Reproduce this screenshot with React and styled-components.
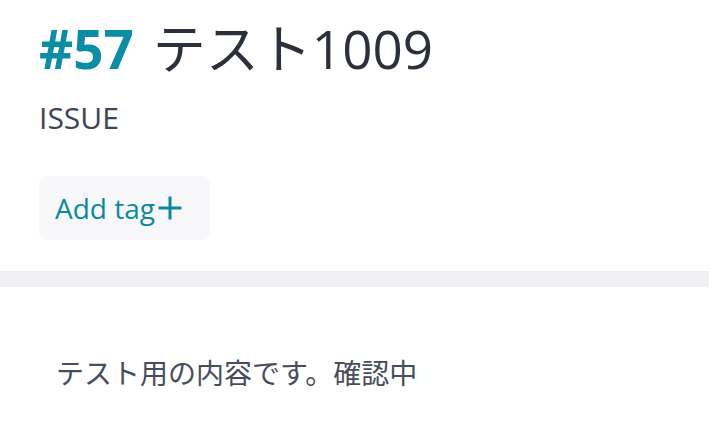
import React from 'react';
import styled, { createGlobalStyle } from 'styled-components';

const GlobalStyle = createGlobalStyle`
  body {
    margin: 0;
    background: #ffffff;
    font-family: "Open Sans", "Noto Sans CJK JP", sans-serif;
  }
`;

const Page = styled.div`
  width: 709px;
  height: 435px;
  overflow: hidden;
  background: #ffffff;
`;

const Header = styled.div`
  padding: 16px 0 0 39px;
  display: flex;
  flex-direction: column;
`;

const Title = styled.h1`
  margin: 0;
  font-size: 53px;
  font-weight: 400;
  line-height: 66px;
  color: #2b303b;
  display: flex;
  gap: 19px;
`;

const Number = styled.span`
  font-weight: 700;
  color: #0a8ea5;
`;

const Kind = styled.div`
  margin-top: 18px;
  font-size: 30px;
  line-height: 36px;
  color: #3d4455;
`;

const TagButton = styled.button`
  margin-top: 40px;
  align-self: flex-start;
  display: flex;
  align-items: center;
  gap: 3px;
  height: 64px;
  padding: 0 28px 0 16px;
  border: none;
  border-radius: 8px;
  background: #f8f8fa;
  color: #0a8aa0;
  font-family: inherit;
  font-size: 28px;
  cursor: pointer;
`;

const Divider = styled.div`
  margin-top: 31px;
  height: 16px;
  background: #f0f0f2;
`;

const Body = styled.div`
  padding: 68px 0 0 56px;
  font-size: 28px;
  line-height: 36px;
  color: #474d5c;
`;

const Plus = () => (
  <svg width="24" height="24" viewBox="0 0 24 24" fill="none" stroke="currentColor" strokeWidth="3" strokeLinecap="square">
    <path d="M12 2v20M2 12h20" />
  </svg>
);

export default function App() {
  return (
    <Page>
      <GlobalStyle />
      <Header>
        <Title>
          <Number>#57</Number>
          <span>テスト1009</span>
        </Title>
        <Kind>ISSUE</Kind>
        <TagButton>
          Add tag
          <Plus />
        </TagButton>
      </Header>
      <Divider />
      <Body>テスト用の内容です。確認中</Body>
    </Page>
  );
}
